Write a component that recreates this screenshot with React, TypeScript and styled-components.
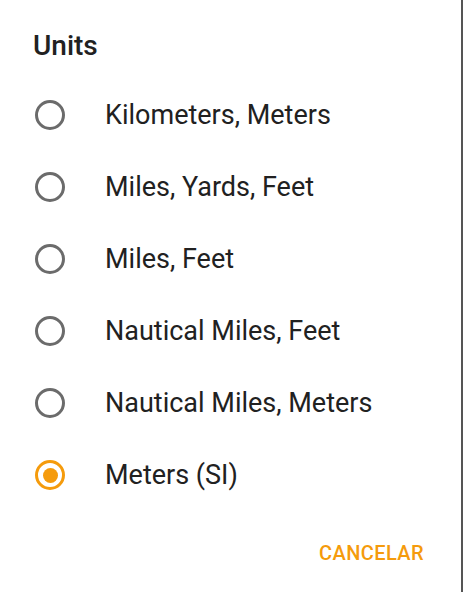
import React, { useState } from "react";
import styled, { createGlobalStyle } from "styled-components";

const GlobalStyle = createGlobalStyle`
  html, body { margin: 0; padding: 0; background: #ffffff; }
  body { font-family: Roboto, "Noto Sans", Arial, sans-serif; }
`;

const ACCENT = "#f59b0c";

const Dialog = styled.div`
  box-sizing: border-box;
  width: 463px;
  min-height: 592px;
  background: #ffffff;
  border-right: 2px solid #555555;
  display: flex;
  flex-direction: column;
`;

const Title = styled.h2`
  margin: 0 0 17px 0;
  padding: 30px 0 0 33px;
  font-size: 28px;
  line-height: 32px;
  font-weight: 500;
  color: #212121;
`;

const List = styled.div`
  display: flex;
  flex-direction: column;
`;

const Row = styled.label`
  display: flex;
  align-items: center;
  height: 72px;
  padding-left: 35px;
  gap: 40px;
  cursor: pointer;
`;

const Radio = styled.span<{ $checked: boolean }>`
  box-sizing: border-box;
  width: 30px;
  height: 30px;
  flex: none;
  border-radius: 50%;
  border: 3px solid ${(p) => (p.$checked ? ACCENT : "#6b6b6b")};
  display: flex;
  align-items: center;
  justify-content: center;
  &::after {
    content: "";
    width: 15px;
    height: 15px;
    border-radius: 50%;
    background: ${ACCENT};
    display: ${(p) => (p.$checked ? "block" : "none")};
  }
`;

const Label = styled.span`
  font-size: 27px;
  line-height: 72px;
  color: #212121;
  white-space: nowrap;
`;

const Footer = styled.div`
  display: flex;
  justify-content: flex-end;
  margin-top: 24px;
  padding-right: 37px;
`;

const TextButton = styled.button`
  background: none;
  border: none;
  padding: 0;
  font-family: Roboto, "Noto Sans", Arial, sans-serif;
  font-size: 20px;
  line-height: 36px;
  font-weight: 500;
  letter-spacing: 0.4px;
  color: ${ACCENT};
  cursor: pointer;
`;

const options = [
  "Kilometers, Meters",
  "Miles, Yards, Feet",
  "Miles, Feet",
  "Nautical Miles, Feet",
  "Nautical Miles, Meters",
  "Meters (SI)",
];

export default function App() {
  const [selected, setSelected] = useState(5);
  return (
    <>
      <GlobalStyle />
      <Dialog>
        <Title>Units</Title>
        <List>
          {options.map((o, i) => (
            <Row key={o} onClick={() => setSelected(i)}>
              <Radio $checked={selected === i} />
              <Label>{o}</Label>
            </Row>
          ))}
        </List>
        <Footer>
          <TextButton>CANCELAR</TextButton>
        </Footer>
      </Dialog>
    </>
  );
}
